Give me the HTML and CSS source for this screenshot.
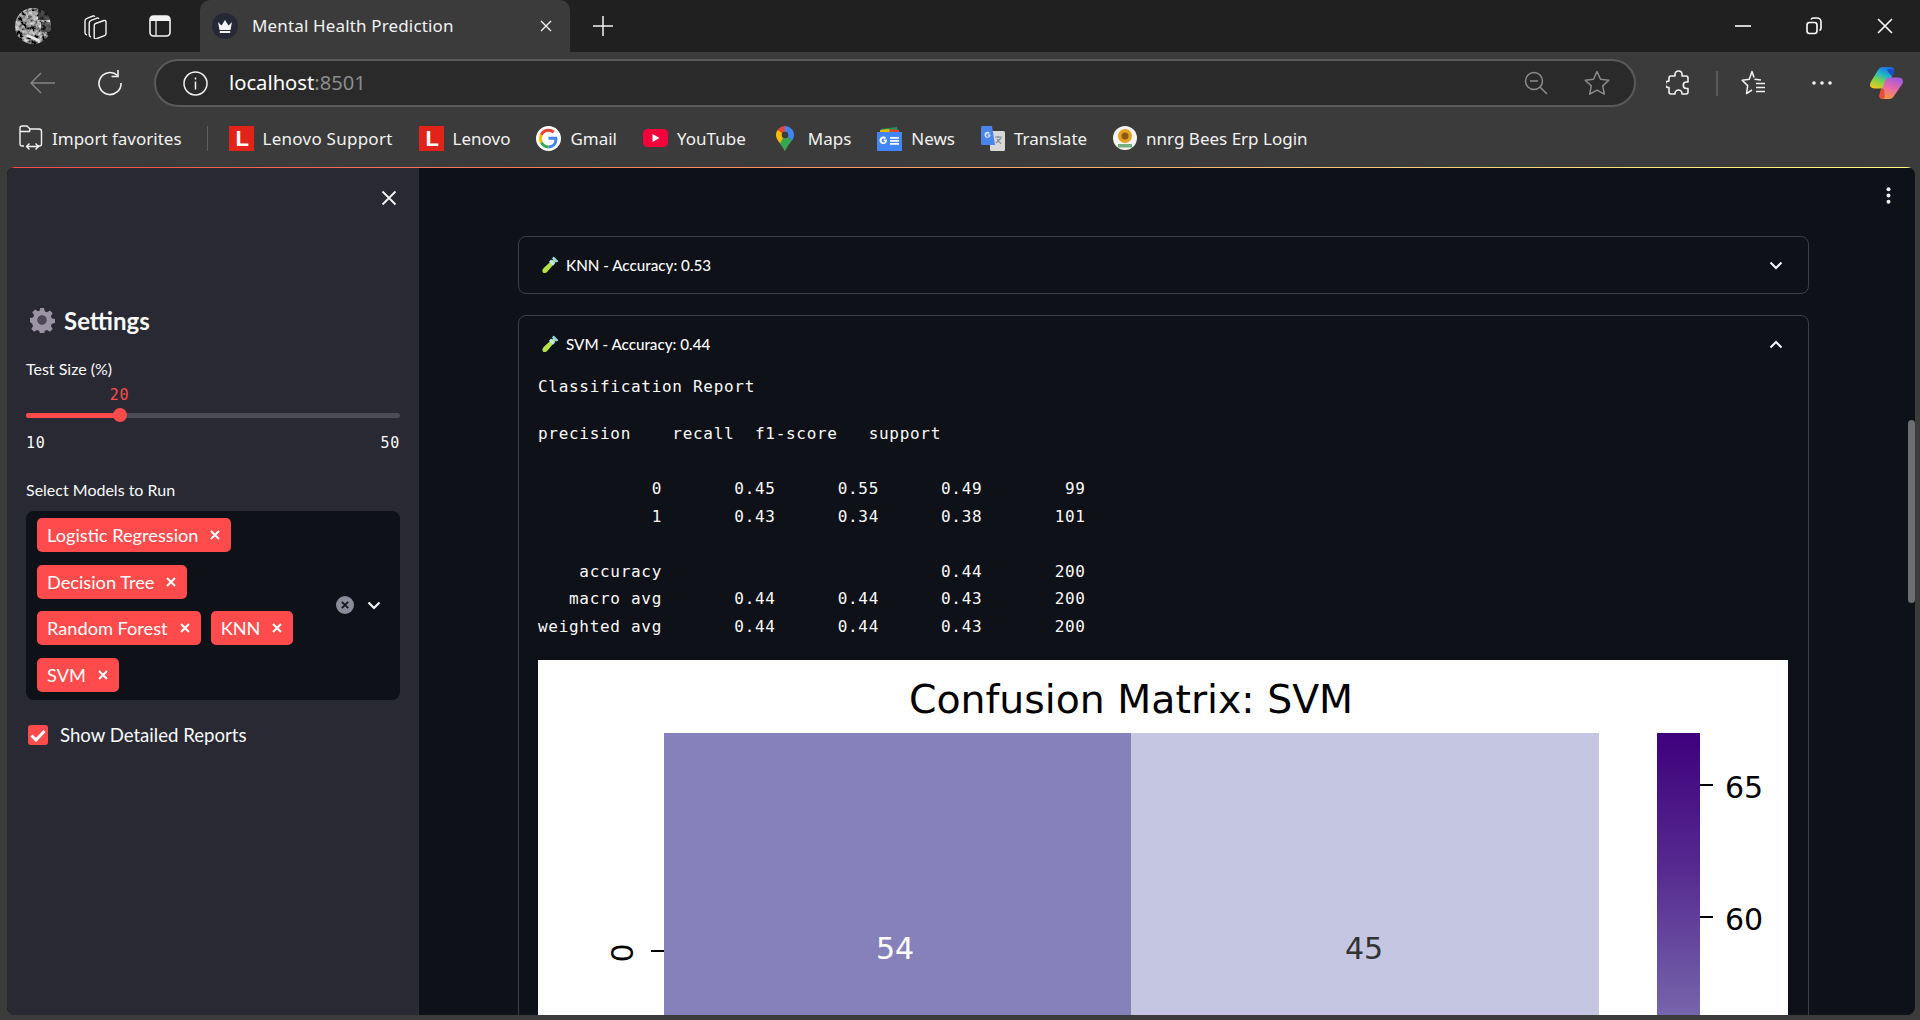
FILE: index.html
```html
<!DOCTYPE html>
<html lang="en">
<head>
    <meta charset="UTF-8">
    <meta name="viewport" content="width=device-width, initial-scale=1.0">
    <title>Mental Health Prediction</title>
    <link rel="stylesheet" href="styles.css">
</head>
<body>
    <!-- browser chrome -->
    <div class="tabstrip">
        <div class="strip-btn avatar">
            <svg width="36" height="36" viewBox="0 0 36 36">
                <defs>
                    <clipPath id="avatarClip"><circle cx="18" cy="18" r="18"/></clipPath>
                    <filter id="avatarNoise" x="0" y="0" width="100%" height="100%">
                        <feTurbulence type="fractalNoise" baseFrequency="0.22" numOctaves="3" seed="7"/>
                        <feColorMatrix type="matrix" values="1.800 0 0 0 -0.620  1.800 0 0 0 -0.620  1.800 0 0 0 -0.620  0 0 0 0 1"/>
                    </filter>
                </defs>
                <g clip-path="url(#avatarClip)">
                    <rect width="36" height="36" filter="url(#avatarNoise)"/>
                    <rect x="23" y="0" width="13" height="12" fill="#222" opacity="0.700"/>
                    <rect x="26" y="14" width="10" height="10" fill="#2a2a2a" opacity="0.600"/>
                    <rect x="14" y="3" width="8" height="9" fill="#c4c4c4" opacity="0.500"/>
                    <path d="M12 26l12 5-1 2.500-12-5z" fill="#e8e8e8"/>
                </g>
            </svg>
        </div>
        <div class="strip-btn collections">
            <svg width="26" height="26" viewBox="0 0 26 26" fill="none" stroke="#f2f2f2" stroke-width="1.4" stroke-linejoin="round">
                <path d="M5 22c-1-.3-2-1-2-2.200V8c0-1.500.8-2.300 2-2.700l6-2.300c1-.3 1.500 0 1.800.8"/>
                <path d="M9 24c-1-.3-1.800-1-1.800-2.200V10c0-1.500.8-2.300 2-2.700l5.800-2.200c1-.3 1.600 0 1.800.8"/>
                <path d="M13.500 10.500l8.500-3c1.100-.3 2 .3 2 1.500v11.500c0 1-.5 1.800-1.500 2.200l-8 3c-1.200.4-2.300-.2-2.300-1.500V12.700c0-1 .5-1.800 1.300-2.200z"/>
            </svg>
        </div>
        <div class="strip-btn vtabs">
            <svg width="22" height="22" viewBox="0 0 22 22">
                <rect x="1" y="1" width="20" height="20" rx="3.500" fill="none" stroke="#f2f2f2" stroke-width="1.600"/>
                <path d="M1 6V4.500C1 2.500 2.500 1 4.500 1h13C19.500 1 21 2.500 21 4.500V6z" fill="#f2f2f2"/>
                <path d="M7 6v15" stroke="#f2f2f2" stroke-width="1.300"/>
            </svg>
        </div>
        <div class="tab">
            <span class="tab-favicon">
                <svg width="16" height="13" viewBox="0 0 16 13"><path d="M1 2l3.500 3.500L8 0l3.500 5.500L15 2l-1.500 8h-11zM2.800 11h10.400v2H2.800z" fill="#f4f4f4"/></svg>
            </span>
            <span class="tab-title">Mental Health Prediction</span>
            <svg class="tab-close" width="12" height="12" viewBox="0 0 12 12"><path d="M1 1l10 10M11 1L1 11" stroke="#f2f2f2" stroke-width="1.400"/></svg>
        </div>
        <div class="strip-btn new-tab">
            <svg width="20" height="20" viewBox="0 0 20 20"><path d="M10 0v20M0 10h20" stroke="#f2f2f2" stroke-width="1.500"/></svg>
        </div>
        <div class="window-controls">
            <div class="win-btn"><svg width="16" height="16" viewBox="0 0 16 16"><path d="M0 8h16" stroke="#fff" stroke-width="1.600"/></svg></div>
            <div class="win-btn"><svg width="16" height="18" viewBox="0 0 16 18" fill="none" stroke="#fff" stroke-width="1.600"><rect x="1" y="5.500" width="10" height="11" rx="2.500"/><path d="M5 2.500c.5-1 1.200-1.500 2.500-1.500H11c2.200 0 4 1.800 4 4v6c0 1.200-.5 2-1.500 2.500"/></svg></div>
            <div class="win-btn"><svg width="16" height="16" viewBox="0 0 16 16"><path d="M1 1l14 14M15 1L1 15" stroke="#fff" stroke-width="1.600"/></svg></div>
        </div>
    </div>

    <div class="toolbar">
        <div class="tool-btn back">
            <svg width="26" height="24" viewBox="0 0 26 24" fill="none" stroke="#858585" stroke-width="1.500"><path d="M1 12h24M11 2L1 12l10 10"/></svg>
        </div>
        <div class="tool-btn reload">
            <svg width="26" height="26" viewBox="0 0 26 26" fill="none" stroke="#f2f2f2" stroke-width="1.600"><path d="M20.500 5.500A11 11 0 1 0 24 13"/><path d="M21 0v6.500h-6.500"/></svg>
        </div>
        <div class="address-bar">
            <svg class="info-icon" width="25" height="25" viewBox="0 0 25 25" fill="none" stroke="#f2f2f2" stroke-width="1.500"><circle cx="12.500" cy="12.500" r="11.500"/><path d="M12.500 10.500v8M12.500 6.500v2"/></svg>
            <span class="url">localhost<span class="url-port">:8501</span></span>
            <svg class="zoom-icon" width="24" height="24" viewBox="0 0 24 24" fill="none" stroke="#8c8c8c" stroke-width="1.500"><circle cx="10" cy="10" r="8.500"/><path d="M6 10h8M16 16l7 7"/></svg>
            <svg class="star-icon" width="26" height="26" viewBox="0 0 26 26" fill="none" stroke="#8c8c8c" stroke-width="1.500" stroke-linejoin="round"><path d="M13 1.500l3.500 7.700 8.300 1-6.100 5.700 1.600 8.300L13 20.100l-7.300 4.100 1.600-8.300-6.100-5.700 8.300-1z"/></svg>
        </div>
        <div class="tool-btn ext">
            <svg width="24" height="26" viewBox="0 0 24 26" fill="none" stroke="#f2f2f2" stroke-width="1.600" stroke-linejoin="round"><path d="M9 4.500C9 2.500 10.500 1 12.500 1S16 2.500 16 4.500V6h4c1.200 0 2 .8 2 2v4h-1.500a3 3 0 0 0 0 6.500H22V22c0 1.200-.8 2-2 2h-4v-.5a3.500 3.500 0 0 0-7 0v.5H5c-1.200 0-2-.8-2-2v-4.500h-.5a3.200 3.200 0 0 1 0-6.400H3V8c0-1.200.8-2 2-2h4z"/></svg>
        </div>
        <span class="tool-sep"></span>
        <div class="tool-btn favs">
            <svg width="26" height="26" viewBox="0 0 26 26" fill="none" stroke="#f2f2f2" stroke-width="1.500" stroke-linejoin="round"><path d="M13 7.500L11 1.500 8.300 9.300l-7.100 1 5.500 5.300-1.200 7.900L11 20"/><path d="M13.500 9.300l6.500.7M15 13.500h9M15 17.500h9M15 21.500h9"/></svg>
        </div>
        <div class="tool-btn dots">
            <svg width="20" height="4" viewBox="0 0 20 4" fill="#f2f2f2"><circle cx="2" cy="2" r="1.800"/><circle cx="10" cy="2" r="1.800"/><circle cx="18" cy="2" r="1.800"/></svg>
        </div>
        <div class="tool-btn copilot">
            <svg width="36" height="36" viewBox="0 0 36 36">
                <defs>
                    <linearGradient id="copL" x1="0.700" y1="0" x2="0.200" y2="1">
                        <stop offset="0" stop-color="#1e6fe0"/><stop offset="0.350" stop-color="#20b8c8"/><stop offset="0.650" stop-color="#7fd14a"/><stop offset="1" stop-color="#f5c71a"/>
                    </linearGradient>
                    <linearGradient id="copR" x1="0.700" y1="0" x2="0.300" y2="1">
                        <stop offset="0" stop-color="#a05be0"/><stop offset="0.500" stop-color="#e86aa8"/><stop offset="1" stop-color="#f59a3c"/>
                    </linearGradient>
                </defs>
                <path d="M10 5c1-2 3-3 5-3h7c2 0 3.500 1 4.200 2.800L21 20c-.8 2.200-2.500 3.500-5 3.500H7c-3 0-5-1.500-5-3.500 0-1 .2-1.800.6-2.800z" fill="url(#copL)"/>
                <path d="M19 5c1.500-1 4-1.500 6-.5 1.500.7 1.800 2.300 1.200 4L24 11l-3-3z" fill="#1a4fc4"/>
                <path d="M26 31c-1 2-3 3-5 3h-5c-2 0-3.500-1-4.200-2.800L17 16c.8-2.200 2.500-3.500 5-3.500h8c3 0 5 1.500 5 3.500 0 1-.1 1.800-.6 2.800z" fill="url(#copR)"/>
                <path d="M13 24h3l1 7c-.5 2-1.500 3-3 3-1.500 0-2.500-1-3-3z" fill="#e8503c"/>
            </svg>
        </div>
    </div>

    <div class="bookmarks">
        <div class="bm">
            <svg width="24" height="26" viewBox="0 0 24 26" fill="none" stroke="#f2f2f2" stroke-width="1.400" stroke-linejoin="round"><path d="M5 21H3c-1.200 0-2-.8-2-2V3c0-1.200.8-2 2-2h5l3 3h9c1.500 0 2.500 1 2.500 2.500V19c0 1.200-.8 2-2 2h-1.500"/><path d="M1 6.500h9.500L11 4"/><path d="M8 21.500h11M10.500 18.500l-3 3 3 3M16.500 18.500l3 3-3 3"/></svg>
            <span>Import favorites</span>
        </div>
        <span class="bm-sep"></span>
        <div class="bm lenovo-first">
            <span class="lenovo-icon">L</span>
            <span class="lenovo-support">Lenovo Support</span>
        </div>
        <div class="bm">
            <span class="lenovo-icon">L</span>
            <span>Lenovo</span>
        </div>
        <div class="bm">
            <svg width="25" height="25" viewBox="0 0 25 25">
                <circle cx="12.500" cy="12.500" r="12.500" fill="#fff"/>
                <path d="M12.500 12.300h7.300c.1.500.1 1 .1 1.400 0 4.300-3 7.200-7.400 7.200" fill="none" stroke="#4285f4" stroke-width="3"/>
                <path d="M12.500 20.900c-3.200 0-5.900-1.800-7.200-4.500" fill="none" stroke="#34a853" stroke-width="3"/>
                <path d="M5.300 16.400c-1.100-2.400-1.100-5.200 0-7.600" fill="none" stroke="#fbbc05" stroke-width="3"/>
                <path d="M5.300 8.800C6.600 6 9.300 4.200 12.500 4.200c2.100 0 3.900.8 5.300 2" fill="none" stroke="#ea4335" stroke-width="3"/>
            </svg>
            <span>Gmail</span>
        </div>
        <div class="bm">
            <svg width="25" height="18" viewBox="0 0 25 18"><rect width="25" height="18" rx="4.500" fill="#f5003c"/><path d="M9.500 5l7 4-7 4z" fill="#fff"/></svg>
            <span>YouTube</span>
        </div>
        <div class="bm maps-item">
            <svg width="18" height="25" viewBox="0 0 18 25">
                <path d="M9 25C7 19 0 15 0 9c0-2 .6-3.700 1.800-5.200L9 9z" fill="#f9bc05"/>
                <path d="M1.800 3.800C3.500 1.500 6 0 9 0v9z" fill="#e8453c"/>
                <path d="M9 0c2 0 3.800.7 5.200 1.800L9 9z" fill="#4285f4"/>
                <path d="M14.200 1.800C16.500 3.500 18 6 18 9c0 2-.8 3.800-2 5.500L9 9z" fill="#4285f4"/>
                <path d="M16 14.500C13.500 18 10.500 21 9 25L4 17l5-8z" fill="#34a853"/>
                <circle cx="9" cy="9" r="3.300" fill="#3c3c3c"/>
            </svg>
            <span>Maps</span>
        </div>
        <div class="bm">
            <svg width="25" height="25" viewBox="0 0 25 25">
                <path d="M4 3l16-2 1 5H4z" fill="#0f9d58"/>
                <path d="M3 4l9-1 1 4H3z" fill="#f4b400"/>
                <path d="M13 3l9 1v3h-9z" fill="#db4437"/>
                <rect x="0" y="6" width="25" height="19" fill="#4285f4"/>
                <path d="M10 13.500H6.700v1.700h1.600c-.3.900-1 1.300-1.700 1.300a2 2 0 0 1 0-4.100c.5 0 1 .2 1.300.5l1.200-1.200a3.800 3.800 0 1 0 1 2.500z" fill="#fff"/>
                <path d="M13 11h9v1.800h-9zM13 14h9v1.800h-9zM13 17h9v1.800h-9z" fill="#fff"/>
            </svg>
            <span>News</span>
        </div>
        <div class="bm">
            <svg width="24" height="25" viewBox="0 0 24 25">
                <rect x="9" y="5" width="15" height="20" rx="1.500" fill="#d8d8d8"/>
                <path d="M14 11h7M17 10v2M15 17l5-5M16 13l4 5" stroke="#808a94" stroke-width="1.200" fill="none"/>
                <path d="M1.500 0H11l3 19H1.500C.6 19 0 18.400 0 17.500v-16C0 .6.600 0 1.500 0z" fill="#4a86e8"/>
                <path d="M9.500 8.500H6.800v1.300h1.300c-.2.700-.7 1-1.300 1a1.600 1.600 0 0 1 0-3.300c.4 0 .8.100 1 .4l1-1a3 3 0 1 0 .7 1.600z" fill="#dfe8f8"/>
            </svg>
            <span>Translate</span>
        </div>
        <div class="bm">
            <svg width="24" height="24" viewBox="0 0 24 24">
                <circle cx="12" cy="12" r="12" fill="#f4f4f0"/>
                <circle cx="12" cy="10" r="7" fill="#e8a020"/>
                <circle cx="12" cy="10" r="3.500" fill="#8a5a14"/>
                <path d="M5 18h14v3.500H5z" fill="#4a9a5a" opacity="0.750"/>
            </svg>
            <span>nnrg Bees Erp Login</span>
        </div>
    </div>

    <!-- the streamlit page -->
    <div class="page">
        <div class="decoration"></div>
        <div class="app">
            <aside class="sidebar">
                <div class="sidebar-top">
                    <svg width="16" height="16" viewBox="0 0 16 16"><path d="M1.500 1.500l13 13M14.500 1.500l-13 13" stroke="#f5f5f5" stroke-width="1.800"/></svg>
                </div>
                <h2 class="sidebar-title">
                    <svg width="26" height="26" viewBox="0 0 26 26">
                        <path fill="#9a94a4" fill-rule="evenodd" d="M11 1h4l.7 3.300 2.300 1 2.900-1.800 2.800 2.800-1.800 2.900 1 2.300 3.100.5v4l-3.100.7-1 2.300 1.800 2.900-2.800 2.800-2.900-1.800-2.300 1-.7 3.100h-4l-.7-3.100-2.300-1-2.900 1.800-2.800-2.800 1.800-2.900-1-2.300L1 15V11l3.100-.5 1-2.300-1.800-2.900 2.800-2.800 2.900 1.800 2.300-1zM13 8.500a4.500 4.500 0 1 0 0 9 4.500 4.500 0 0 0 0-9z"/>
                        <circle cx="13" cy="13" r="4.500" fill="#4c4858"/>
                    </svg>
                    Settings
                </h2>
                <label class="field-label test-label">Test Size (%)</label>
                <div class="slider">
                    <div class="slider-value" style="left: 25%">20</div>
                    <div class="slider-track">
                        <div class="slider-fill" style="width: 25%"></div>
                        <div class="slider-thumb" style="left: 25%"></div>
                    </div>
                    <div class="slider-ends"><span>10</span><span>50</span></div>
                </div>
                <label class="field-label models-label">Select Models to Run</label>
                <div class="multiselect">
                    <div class="chips">
                        <span class="chip">Logistic Regression<svg viewBox="0 0 10 10"><path d="M1 1l8 8M9 1L1 9"/></svg></span>
                        <span class="chip">Decision Tree<svg viewBox="0 0 10 10"><path d="M1 1l8 8M9 1L1 9"/></svg></span>
                        <span class="chip">Random Forest<svg viewBox="0 0 10 10"><path d="M1 1l8 8M9 1L1 9"/></svg></span>
                        <span class="chip">KNN<svg viewBox="0 0 10 10"><path d="M1 1l8 8M9 1L1 9"/></svg></span>
                        <span class="chip">SVM<svg viewBox="0 0 10 10"><path d="M1 1l8 8M9 1L1 9"/></svg></span>
                    </div>
                    <div class="select-controls">
                        <svg width="18" height="18" viewBox="0 0 18 18"><circle cx="9" cy="9" r="9" fill="#8a8c99"/><path d="M5.800 5.800l6.400 6.400M12.200 5.800l-6.400 6.400" stroke="#14161d" stroke-width="1.800"/></svg>
                        <svg width="14" height="9" viewBox="0 0 14 9" fill="none"><path d="M1.500 1.500L7 7l5.500-5.500" stroke="#f5f5f5" stroke-width="2.200"/></svg>
                    </div>
                </div>
                <div class="check-row">
                    <span class="checkbox">
                        <svg width="16" height="13" viewBox="0 0 16 13" fill="none"><path d="M1.500 6.500l4.500 4.500 8.500-9" stroke="#fff" stroke-width="3"/></svg>
                    </span>
                    <span>Show Detailed Reports</span>
                </div>
            </aside>

            <main class="main">
                <svg class="main-menu" width="5" height="17" viewBox="0 0 5 17" fill="#f0f0f0"><circle cx="2.500" cy="2.200" r="2"/><circle cx="2.500" cy="8.500" r="2"/><circle cx="2.500" cy="14.800" r="2"/></svg>
                <div class="scrollbar-thumb"></div>

                <section class="expander">
                    <div class="expander-head">
                        <svg class="tube" width="17" height="18" viewBox="0 0 17 18"><path d="M12 1l4 4-2 .5-8.500 10c-1.500 1.800-3.500 2-4.500 1s-.8-3 .7-4.400L11.500 3z" fill="#b6e24a"/><path d="M11.500 0.500l5 5-2.500 1-4-4z" fill="#8fd4f5"/><path d="M9 3.500l4 4-2 2.300-4-4z" fill="#bfe6f5"/></svg>
                        <span class="expander-title">KNN - Accuracy: 0.53</span>
                        <svg class="chev" width="14" height="9" viewBox="0 0 14 9" fill="none"><path d="M1.500 1.500L7 7l5.500-5.500" stroke="#f5f5f5" stroke-width="2"/></svg>
                    </div>
                </section>

                <section class="expander">
                    <div class="expander-head">
                        <svg class="tube" width="17" height="18" viewBox="0 0 17 18"><path d="M12 1l4 4-2 .5-8.500 10c-1.500 1.800-3.500 2-4.500 1s-.8-3 .7-4.400L11.500 3z" fill="#b6e24a"/><path d="M11.500 0.500l5 5-2.500 1-4-4z" fill="#8fd4f5"/><path d="M9 3.500l4 4-2 2.300-4-4z" fill="#bfe6f5"/></svg>
                        <span class="expander-title">SVM - Accuracy: 0.44</span>
                        <svg class="chev" width="14" height="9" viewBox="0 0 14 9" fill="none"><path d="M1.500 7.500L7 2l5.500 5.500" stroke="#f5f5f5" stroke-width="2"/></svg>
                    </div>
                    <div class="expander-body">
                        <p class="report-title">Classification Report</p>
<pre class="report">precision    recall  f1-score   support

           0       0.45      0.55      0.49        99
           1       0.43      0.34      0.38       101

    accuracy                           0.44       200
   macro avg       0.44      0.44      0.43       200
weighted avg       0.44      0.44      0.43       200</pre>
                        <svg class="matrix" width="1250" height="355" viewBox="0 0 1250 355">
                            <defs>
                                <linearGradient id="cbar" x1="0" y1="0" x2="0" y2="1">
                                    <stop offset="0" stop-color="#3f007d"/>
                                    <stop offset="0.470" stop-color="#55298f"/>
                                    <stop offset="1" stop-color="#7565ab"/>
                                </linearGradient>
                            </defs>
                            <rect width="1250" height="355" fill="#fff"/>
                            <text class="m-title" x="593" y="53" text-anchor="middle">Confusion Matrix: SVM</text>
                            <rect x="126" y="73" width="467" height="282" fill="#8681ba"/>
                            <rect x="593" y="73" width="468" height="282" fill="#c5c6e2"/>
                            <text class="m-num" x="357" y="299" text-anchor="middle" fill="#fff">54</text>
                            <text class="m-num" x="826" y="299" text-anchor="middle" fill="#333">45</text>
                            <path d="M113 291h13" stroke="#000" stroke-width="2"/>
                            <text class="m-num" transform="translate(95 293) rotate(-90)" text-anchor="middle" fill="#000">0</text>
                            <rect x="1119" y="73" width="43" height="282" fill="url(#cbar)"/>
                            <path d="M1162 125h13M1162 257h13" stroke="#000" stroke-width="2"/>
                            <text class="m-num" x="1187" y="138">65</text>
                            <text class="m-num" x="1187" y="270">60</text>
                        </svg>
                    </div>
                </section>
            </main>
        </div>
    </div>
</body>
</html>
```

FILE: styles.css
```css
* {
    box-sizing: border-box;
}

html,
body {
    height: 100%;
}

body {
    margin: 0;
    display: flex;
    flex-direction: column;
    height: 1020px;
    overflow: hidden;
    background-color: #3b3b3b;
    color: #fff;
    font-family: 'Noto Sans', sans-serif;
}

svg {
    display: block;
    flex: none;
}

/* tab strip */
.tabstrip {
    display: flex;
    align-items: center;
    height: 52px;
    padding-left: 13px;
    background-color: #202020;
}

.strip-btn {
    display: flex;
    align-items: center;
    justify-content: center;
    width: 40px;
    height: 40px;
}

.collections {
    margin-left: 22px;
}

.vtabs {
    margin-left: 25px;
}

.tab {
    display: flex;
    align-items: center;
    align-self: flex-end;
    width: 370px;
    height: 52px;
    margin-left: 20px;
    padding: 0 18px 0 12px;
    background-color: #3b3b3b;
    border-radius: 10px 10px 0 0;
}

.tab-favicon {
    display: flex;
    align-items: center;
    justify-content: center;
    width: 26px;
    height: 26px;
    border-radius: 50%;
    background-color: #272835;
}

.tab-title {
    flex: 1;
    margin-left: 14px;
    padding-bottom: 2px;
    font-size: 17px;
    letter-spacing: 0.15px;
    color: #f2f2f2;
}

.new-tab {
    margin-left: 13px;
}

.window-controls {
    display: flex;
    margin-left: auto;
    padding-right: 12px;
}

.win-btn {
    display: flex;
    align-items: center;
    justify-content: center;
    width: 46px;
    height: 40px;
    margin-left: 25px;
}

/* address row */
.toolbar {
    display: flex;
    align-items: center;
    height: 56px;
    padding: 6px 14px 0 23px;
    background-color: #3b3b3b;
}

.tool-btn {
    display: flex;
    align-items: center;
    justify-content: center;
    width: 40px;
    height: 40px;
}

.reload {
    margin-left: 27px;
}

.address-bar {
    display: flex;
    flex: 1;
    align-items: center;
    height: 48px;
    margin-left: 24px;
    padding: 0 24px 0 27px;
    background-color: #2a2a2a;
    border: 2px solid #5a5a5a;
    border-radius: 24px;
}

.url {
    flex: 1;
    margin-left: 21px;
    padding-bottom: 2px;
    font-size: 20.200px;
    color: #fff;
}

.url-port {
    color: #8c8c8c;
}

.star-icon {
    margin-left: 36px;
}

.ext {
    margin-left: 22px;
}

.tool-sep {
    width: 2px;
    height: 25px;
    margin: 0 16px 0 18px;
    background-color: #5a5a5a;
}

.dots {
    margin-left: 28px;
}

.copilot {
    margin-left: 24px;
}

/* bookmarks */
.bookmarks {
    display: flex;
    align-items: center;
    gap: 26px;
    height: 59px;
    padding: 1px 0 0 19px;
    background-color: #3b3b3b;
}

.bm {
    display: flex;
    align-items: center;
    gap: 9px;
    font-size: 17px;
    color: #f2f2f2;
}

.bm-sep {
    width: 1px;
    height: 25px;
    margin-left: -1px;
    background-color: #5f5f5f;
}

.lenovo-first {
    margin-left: -5px;
}

.lenovo-support {
    letter-spacing: 0.25px;
}

.maps-item {
    gap: 14px;
    margin-left: 4px;
}

.lenovo-icon {
    width: 25px;
    height: 25px;
    padding-left: 7px;
    background-color: #e2231a;
    color: #fff;
    font-family: 'Liberation Sans', sans-serif;
    font-size: 22px;
    font-weight: 700;
    line-height: 25px;
}

/* page */
.page {
    display: flex;
    flex: 1;
    flex-direction: column;
    margin: 0 5px 5px 7px;
    border-radius: 8px;
    overflow: hidden;
    background-color: #0e1117;
}

.decoration {
    flex: none;
    height: 1px;
    background: linear-gradient(90deg, #ff4b4b, #fffd80);
}

.app {
    display: flex;
    flex: 1;
    min-height: 0;
}

.sidebar {
    flex: none;
    width: 412px;
    padding: 22px 19px 0;
    background-color: #282933;
    font-family: 'Lato', sans-serif;
}

.sidebar-top {
    display: flex;
    justify-content: flex-end;
    padding-right: 3px;
    height: 20px;
}

.sidebar-title {
    display: flex;
    align-items: center;
    gap: 9px;
    height: 34px;
    margin: 93px 0 0 3px;
    font-size: 24px;
    font-weight: 700;
    color: #fafafa;
}

.field-label {
    display: block;
    font-size: 16px;
    line-height: 20px;
    color: #fafafa;
}

.test-label {
    margin-top: 22px;
}

.models-label {
    margin-top: 27px;
}

.slider {
    position: relative;
    margin-top: 6px;
    padding-top: 28px;
}

.slider-value {
    position: absolute;
    top: 0;
    transform: translateX(-50%);
    font-family: 'DejaVu Sans Mono', monospace;
    font-size: 15px;
    letter-spacing: 0.7px;
    line-height: 20px;
    color: #ff4b4b;
}

.slider-track {
    position: relative;
    height: 5px;
    background-color: #4b4c58;
    border-radius: 3px;
}

.slider-fill {
    height: 5px;
    background-color: #ff4b4b;
    border-radius: 3px;
}

.slider-thumb {
    position: absolute;
    top: -5px;
    width: 14px;
    height: 14px;
    margin-left: -7px;
    background-color: #ff4b4b;
    border-radius: 50%;
}

.slider-ends {
    display: flex;
    justify-content: space-between;
    margin-top: 15px;
    font-family: 'DejaVu Sans Mono', monospace;
    font-size: 15px;
    letter-spacing: 0.7px;
    line-height: 20px;
    color: #fafafa;
}

.multiselect {
    display: flex;
    align-items: center;
    height: 189px;
    margin-top: 11px;
    padding: 7px 0 8px 11px;
    background-color: #0e1117;
    border-radius: 8px;
}

.chips {
    display: flex;
    flex-wrap: wrap;
    gap: 12.600px 10px;
    width: 295px;
}

.chip {
    display: flex;
    align-items: center;
    height: 34px;
    padding: 0 11px 0 10px;
    background-color: #ff4b4b;
    border-radius: 5px;
    font-size: 18.200px;
    color: #fff;
}

.chip svg {
    width: 10px;
    height: 10px;
    margin-left: 12px;
    fill: none;
    stroke: #fff;
    stroke-width: 2;
}

.select-controls {
    display: flex;
    align-items: center;
    gap: 13px;
    margin-left: 4px;
}

.check-row {
    display: flex;
    align-items: center;
    gap: 12px;
    height: 20px;
    margin: 25px 0 0 2px;
    font-size: 18.600px;
    color: #fafafa;
}

.checkbox {
    display: flex;
    align-items: center;
    justify-content: center;
    width: 20px;
    height: 20px;
    background-color: #ff4b4b;
    border-radius: 3px;
}

/* main column */
.main {
    position: relative;
    flex: 1;
    min-width: 0;
    padding: 68px 106px 0 99px;
    overflow: hidden;
}

.main-menu {
    position: absolute;
    top: 19px;
    right: 24px;
}

.scrollbar-thumb {
    position: absolute;
    top: 252px;
    right: 0;
    width: 7px;
    height: 183px;
    background-color: #6c6d71;
    border-radius: 4px;
}

.expander {
    margin-bottom: 21px;
    border: 1px solid #3d3f45;
    border-radius: 8px;
}

.expander-head {
    display: flex;
    align-items: center;
    height: 56px;
    padding: 0 25px 0 23px;
}

.expander-title {
    flex: 1;
    margin-left: 7px;
    font-family: 'Lato', sans-serif;
    font-size: 15.200px;
    font-weight: 500;
    color: #fafafa;
}

.expander-body {
    padding: 1px 19px 20px;
}

.report-title,
.report {
    margin: 0;
    font-family: 'DejaVu Sans Mono', monospace;
    font-size: 16px;
    letter-spacing: 0.700px;
    line-height: 27.500px;
    color: #fafafa;
}

.report {
    margin-top: 19.500px;
}

.matrix {
    margin-top: 20px;
}

.matrix text {
    font-family: 'DejaVu Sans', sans-serif;
}

.m-title {
    font-size: 39.400px;
}

.m-num {
    font-size: 30px;
}
```
